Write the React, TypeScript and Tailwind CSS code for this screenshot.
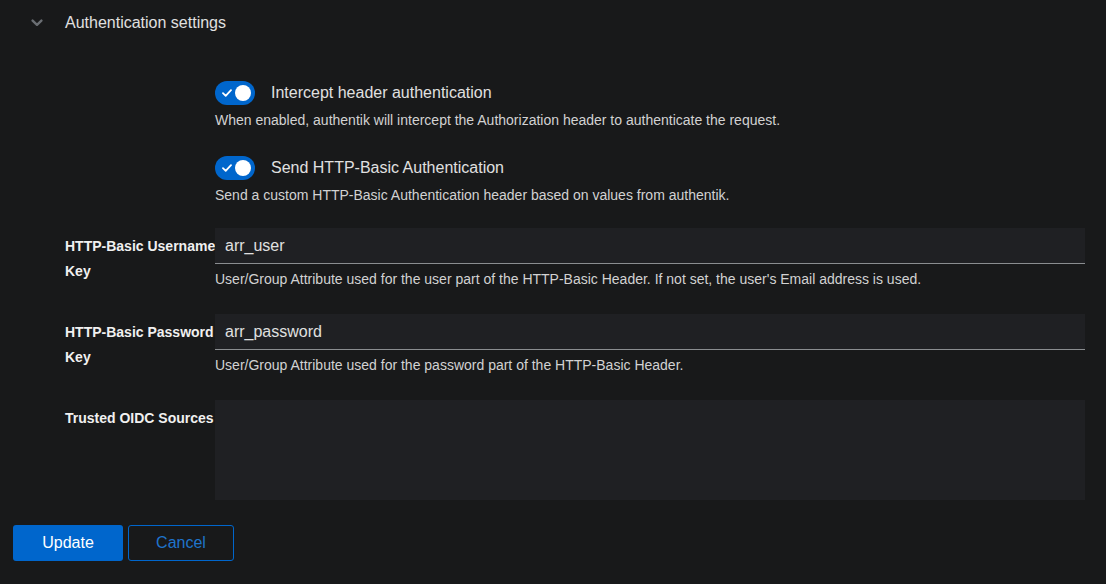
import React from 'react'

function Toggle() {
  return (
    <div className="relative h-6 w-10 shrink-0 rounded-full bg-[#0066cc]">
      <svg className="absolute left-[7px] top-[8px]" width="10" height="8" viewBox="0 0 10 8">
        <path d="M1 4.2 L3.7 6.8 L9 1.2" fill="none" stroke="#ffffff" strokeWidth="1.8" strokeLinecap="round" strokeLinejoin="round" />
      </svg>
      <span className="absolute right-1 top-1 h-4 w-4 rounded-full bg-white" />
    </div>
  )
}

function SwitchGroup({ label, help, className }: { label: string; help: string; className?: string }) {
  return (
    <div className={`col-start-2 ${className ?? ''}`}>
      <div className="flex h-6 items-center gap-4">
        <Toggle />
        <span className="text-base leading-6 text-[#e0e0e0]">{label}</span>
      </div>
      <p className="mt-[5px] text-sm leading-[21px] text-[#d2d2d2]">{help}</p>
    </div>
  )
}

function TextGroup({ label, value, help, className }: { label: React.ReactNode; value: string; help: string; className?: string }) {
  return (
    <>
      <div className={`pt-[6px] text-sm font-bold leading-[25px] whitespace-nowrap text-[#f0f0f0] ${className ?? ''}`}>{label}</div>
      <div className={className}>
        <div className="flex h-9 items-center border-b border-[#8a8d90] bg-[#1f2023] px-[10px] text-base text-[#e0e0e0]">
          {value}
        </div>
        <p className="mt-[5px] text-sm leading-[21px] text-[#d2d2d2]">{help}</p>
      </div>
    </>
  )
}

export default function App() {
  return (
    <div className="min-h-screen bg-[#18191a] font-['Liberation_Sans',Arial,sans-serif]">
      <div className="flex items-center pt-[11px] pb-[9px] pl-[31px]">
        <svg width="12" height="8" viewBox="0 0 12 8">
          <path d="M1.6 1.6 L6 5.8 L10.4 1.6" fill="none" stroke="#6a6e73" strokeWidth="2.4" strokeLinecap="round" strokeLinejoin="round" />
        </svg>
        <span className="ml-[22px] text-base leading-6 text-[#e0e0e0]">Authentication settings</span>
      </div>

      <div className="mt-[37px] grid grid-cols-[150px_1fr] pl-[65px] pr-[21px]">
        <SwitchGroup
          label="Intercept header authentication"
          help="When enabled, authentik will intercept the Authorization header to authenticate the request."
        />
        <SwitchGroup
          className="mt-[25px]"
          label="Send HTTP-Basic Authentication"
          help="Send a custom HTTP-Basic Authentication header based on values from authentik."
        />
        <TextGroup
          className="mt-[22px]"
          label={<>HTTP-Basic Username<br />Key</>}
          value="arr_user"
          help="User/Group Attribute used for the user part of the HTTP-Basic Header. If not set, the user's Email address is used."
        />
        <TextGroup
          className="mt-6"
          label={<>HTTP-Basic Password<br />Key</>}
          value="arr_password"
          help="User/Group Attribute used for the password part of the HTTP-Basic Header."
        />
        <div className="mt-6 pt-[6px] text-sm font-bold leading-[25px] whitespace-nowrap text-[#f0f0f0]">Trusted OIDC Sources</div>
        <div className="mt-6 h-[100px] bg-[#1f2023]" />
      </div>

      <div className="mt-[25px] flex gap-[5px] pl-[13px]">
        <button className="h-9 w-[110px] rounded-[3px] bg-[#0066cc] text-base text-white">Update</button>
        <button className="h-9 w-[106px] rounded-[3px] border border-[#0066cc] text-base text-[#1f74cc]">Cancel</button>
      </div>
    </div>
  )
}
